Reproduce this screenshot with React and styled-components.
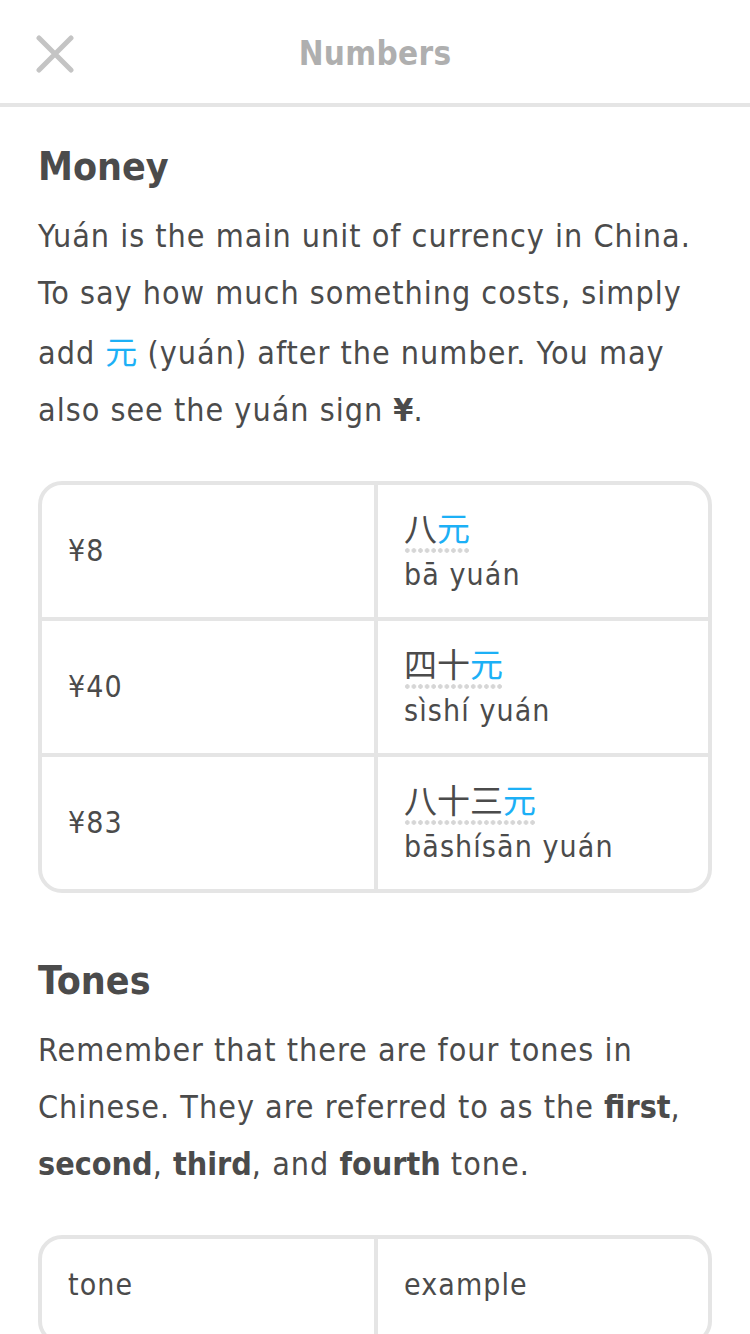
import React from "react";
import styled, { createGlobalStyle } from "styled-components";

const GlobalStyle = createGlobalStyle`
  html, body {
    margin: 0;
    padding: 0;
    background: #ffffff;
  }
  body {
    font-family: "DejaVu Sans Condensed", "DejaVu Sans", "Noto Sans CJK SC", sans-serif;
    color: #4b4b4b;
    -webkit-font-smoothing: antialiased;
  }
`;

const moneyRows = [
  { price: "¥8", hanzi: "八", pinyin: "bā yuán" },
  { price: "¥40", hanzi: "四十", pinyin: "sìshí yuán" },
  { price: "¥83", hanzi: "八十三", pinyin: "bāshísān yuán" },
];

function CloseIcon() {
  return (
    <svg width="38" height="38" viewBox="0 0 38 38" fill="none">
      <path
        d="M3 3 L35 35 M35 3 L3 35"
        stroke="#c4c4c4"
        strokeWidth="5"
        strokeLinecap="round"
      />
    </svg>
  );
}

function App() {
  return (
    <Page>
      <GlobalStyle />
      <Header>
        <CloseButton>
          <CloseIcon />
        </CloseButton>
        <Title>Numbers</Title>
      </Header>

      <Section>
        <Heading>Money</Heading>
        <Paragraph>
          Yuán is the main unit of currency in China.
          <br />
          To say how much something costs, simply
          <br />
          add <Blue>元</Blue> (yuán) after the number. You may
          <br />
          also see the yuán sign <b>¥</b>.
        </Paragraph>

        <Table>
          {moneyRows.map((row) => (
            <Row key={row.price}>
              <Cell>
                <CellText>{row.price}</CellText>
              </Cell>
              <Cell>
                <Hanzi>
                  {row.hanzi}
                  <Blue>元</Blue>
                </Hanzi>
                <Pinyin>{row.pinyin}</Pinyin>
              </Cell>
            </Row>
          ))}
        </Table>
      </Section>

      <Section $gap={63}>
        <Heading>Tones</Heading>
        <Paragraph>
          Remember that there are four tones in
          <br />
          Chinese. They are referred to as the <b>first</b>,
          <br />
          <b>second</b>, <b>third</b>, and <b>fourth</b> tone.
        </Paragraph>

        <Table>
          <Row>
            <Cell $head>
              <CellText>tone</CellText>
            </Cell>
            <Cell $head>
              <CellText>example</CellText>
            </Cell>
          </Row>
        </Table>
      </Section>
    </Page>
  );
}

const Page = styled.div`
  width: 750px;
  height: 1334px;
  overflow: hidden;
`;

const Header = styled.header`
  position: relative;
  height: 103px;
  border-bottom: 4px solid #e5e5e5;
  display: flex;
  align-items: center;
  justify-content: center;
`;

const CloseButton = styled.button`
  position: absolute;
  left: 36px;
  top: 35px;
  width: 38px;
  height: 38px;
  padding: 0;
  border: none;
  background: none;
  display: flex;
`;

const Title = styled.h1`
  margin: 4px 0 0;
  font-size: 33px;
  font-weight: 700;
  color: #afafaf;
  letter-spacing: 0.3px;
`;

const Section = styled.section`
  padding: ${(p) => (p.$gap ? p.$gap : 35)}px 38px 0;
`;

const Heading = styled.h2`
  margin: 0;
  font-size: 39px;
  line-height: 50px;
  font-weight: 700;
  color: #4b4b4b;
`;

const Paragraph = styled.p`
  margin: 16px 0 0;
  font-size: 32px;
  line-height: 57px;
  letter-spacing: 1px;
  color: #4b4b4b;
  white-space: nowrap;

  b {
    font-weight: 700;
    letter-spacing: 0;
  }
`;

const Blue = styled.span`
  color: #1cb0f6;
  font-family: "Noto Sans CJK SC", sans-serif;
  letter-spacing: 0;
`;

const Table = styled.div`
  margin-top: 42px;
  border: 4px solid #e5e5e5;
  border-radius: 24px;
  overflow: hidden;
`;

const Row = styled.div`
  display: grid;
  grid-template-columns: 332px 1fr;
  & + & {
    border-top: 4px solid #e5e5e5;
  }
`;

const Cell = styled.div`
  display: flex;
  flex-direction: column;
  justify-content: center;
  align-items: flex-start;
  min-height: ${(p) => (p.$head ? 40 : 88)}px;
  padding: ${(p) => (p.$head ? "26px 26px 36px" : "22px 26px")};
  & + & {
    border-left: 4px solid #e5e5e5;
  }
`;

const CellText = styled.span`
  font-size: 30px;
  line-height: 40px;
  letter-spacing: 1.1px;
  color: #4b4b4b;
`;

const Hanzi = styled.span`
  font-family: "Noto Sans CJK SC", sans-serif;
  font-size: 33px;
  line-height: 40px;
  padding-bottom: 6px;
  color: #4b4b4b;
  background-image: radial-gradient(circle, #d6d6d6 2px, transparent 2.5px);
  background-size: 6.6px 5px;
  background-repeat: repeat-x;
  background-position: 0 100%;
`;

const Pinyin = styled.span`
  margin-top: 2px;
  font-size: 30px;
  line-height: 40px;
  letter-spacing: 1.1px;
  color: #4b4b4b;
`;

export default App;
